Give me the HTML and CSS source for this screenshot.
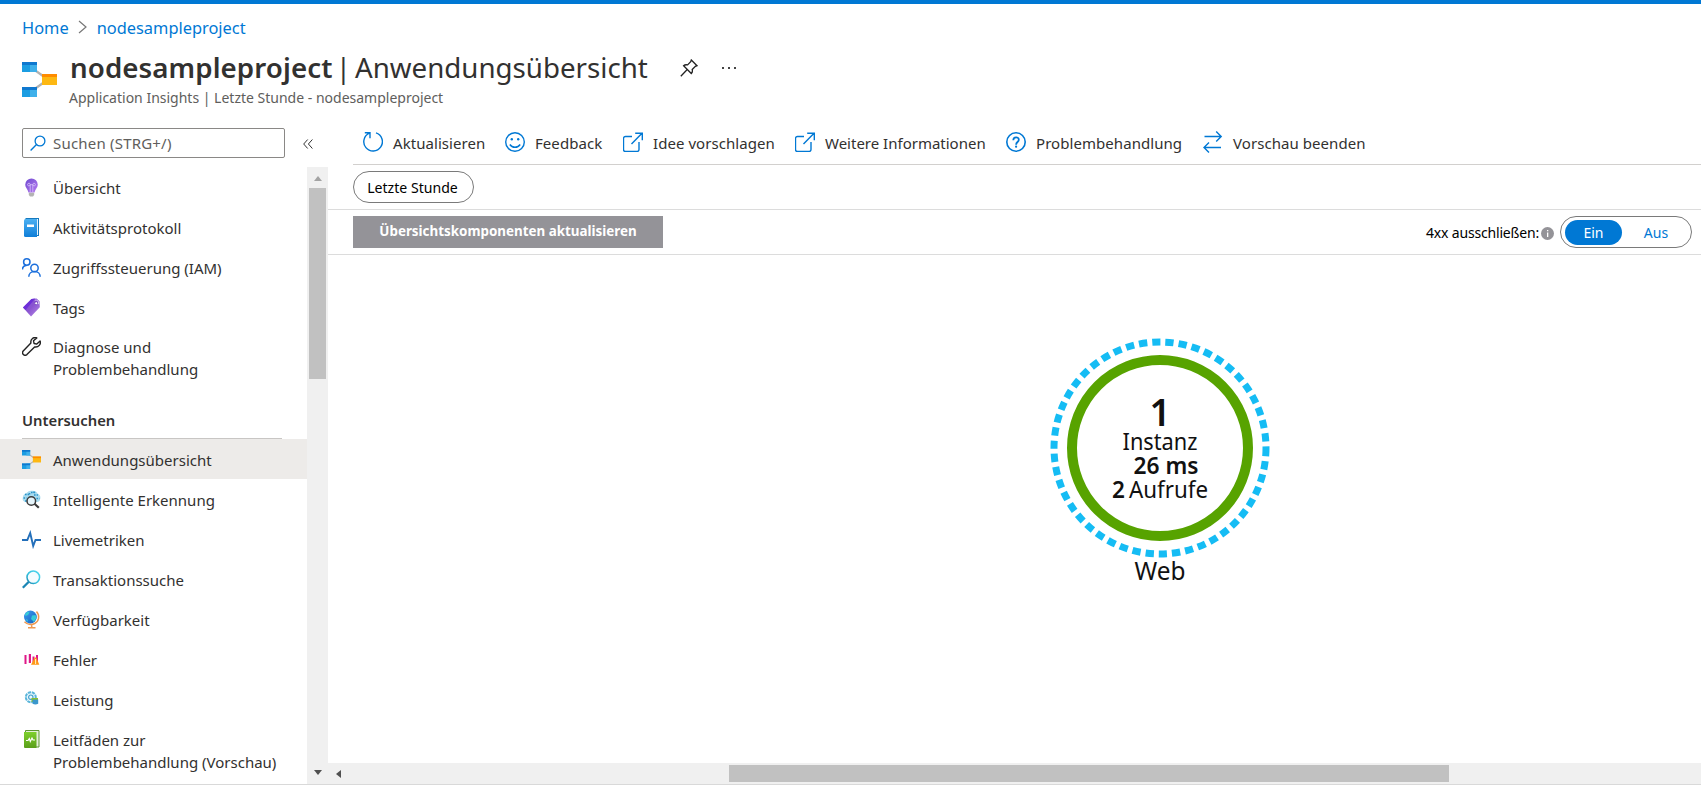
FILE: index.html
```html
<!DOCTYPE html>
<html lang="de">
<head>
<meta charset="utf-8">
<title>nodesampleproject | Anwendungsübersicht</title>
<link rel="stylesheet" href="styles.css">
</head>
<body>
<svg class="defs" width="0" height="0" aria-hidden="true">
  <defs>
    <linearGradient id="bulb" x1="0" y1="0" x2="1" y2="1"><stop offset="0" stop-color="#6f4bd0"/><stop offset="1" stop-color="#b77af0"/></linearGradient>
    <linearGradient id="book" x1="0" y1="0" x2="0" y2="1"><stop offset="0" stop-color="#4cb0f2"/><stop offset="1" stop-color="#0f7ed8"/></linearGradient>
    <linearGradient id="tag" x1="0" y1="0" x2="1" y2="1"><stop offset="0" stop-color="#7a45d8"/><stop offset=".5" stop-color="#8a55d0"/><stop offset="1" stop-color="#b88be8"/></linearGradient>
    <linearGradient id="lens" x1="0" y1="1" x2="1" y2="0"><stop offset="0" stop-color="#1a7ca8"/><stop offset=".4" stop-color="#32bfdc"/><stop offset="1" stop-color="#50d8f0"/></linearGradient>
    <linearGradient id="guide" x1="0" y1="0" x2="0" y2="1"><stop offset="0" stop-color="#7ed02c"/><stop offset="1" stop-color="#5a9e1a"/></linearGradient>
    <linearGradient id="earth" x1="0" y1="0" x2="1" y2="1"><stop offset="0" stop-color="#3f9cf0"/><stop offset="1" stop-color="#1160c0"/></linearGradient>
    <symbol id="appmap" viewBox="0 0 35 35">
      <path d="M14 9l7 5M14 26l7-5" stroke="#b3b3b3" stroke-width="2.2"/>
      <path d="M0 0h15v10H0zM0 25h15v10H0z" fill="#1b9de2"/>
      <path d="M8 0h7v10H8zM8 25h7v10H8z" fill="#3fb0ea"/>
      <path d="M0 0h15v3H0zM0 25h15v3H0z" fill="#0f78cf"/>
      <path d="M20 12h15v11H20z" fill="#fdb813"/><path d="M20 12h15v3H20z" fill="#ff8c00"/>
    </symbol>
    <symbol id="external" viewBox="0 0 20 20"><path d="M9 4.500H2.500a2 2 0 0 0-2 2V17.500a2 2 0 0 0 2 2h11.500a2 2 0 0 0 2-2V10M8.500 12L19 1.200M12.200 1.200H19.300V8.200" fill="none" stroke="#0078d4" stroke-width="1.400"/></symbol>
  </defs>
</svg>
<div class="page">
  <header class="header">
    <nav class="crumbs">
      <a>Home</a>
      <svg class="crumb-sep" width="9" height="14" viewBox="0 0 9 14"><path d="M1 1l7 6-7 6" fill="none" stroke="#777" stroke-width="1.200"/></svg>
      <a>nodesampleproject</a>
    </nav>
    <div class="heading">
      <svg class="heading-icon" width="35" height="35"><use href="#appmap"/></svg>
      <div>
        <h1 class="title"><b>nodesampleproject</b><i class="bar">|</i><span>Anwendungsübersicht</span>
          <svg class="pin" width="18" height="18" viewBox="0 0 18 18"><path d="M11.300 1l5.700 5.700-1.600.6-3.200 3.200c.5 1.800.1 3-.9 4L3.600 6.800c1-1 2.300-1.300 4-.9l3.100-3.200zM7 10.800L.8 17.200" fill="none" stroke="#222" stroke-width="1.300"/></svg>
          <svg class="dots" width="14" height="2" viewBox="0 0 14 2"><path d="M0 0h2v2H0zM6 0h2v2H6zM12 0h2v2h-2z" fill="#444"/></svg>
        </h1>
        <div class="subtitle">Application Insights | Letzte Stunde - nodesampleproject</div>
      </div>
    </div>
  </header>
  <div class="body">
    <aside class="side">
      <div class="search-row">
        <div class="search">
          <svg width="16" height="16" viewBox="0 0 16 16"><circle cx="10" cy="6" r="4.900" fill="none" stroke="#0078d4" stroke-width="1.300"/><path d="M6.500 9.500L.6 15.400" stroke="#0078d4" stroke-width="1.400"/></svg>
          <span>Suchen (STRG+/)</span>
        </div>
        <svg class="collapse" width="10" height="10" viewBox="0 0 10 10"><path d="M4.700.5L.7 5l4 4.500M9.400.5l-4 4.500 4 4.500" fill="none" stroke="#333" stroke-width="1"/></svg>
      </div>
      <div class="side-body">
        <ul class="menu">
          <li><svg width="19" height="19" viewBox="0 0 19 19"><path d="M9.500.5a6.300 6.300 0 0 1 6.300 6.300c0 3-2.800 4.700-3.300 7.700h-6C6 11.500 3.200 9.800 3.200 6.800A6.300 6.300 0 0 1 9.500.5z" fill="url(#bulb)"/><path d="M8.200 14V6.500M10.800 14V6.500M8.200 6.700h2.600M8.200 6.700a1.300 1.300 0 1 1-1.300-1.400c1 0 1.300.6 1.300 1.400M10.800 6.700a1.300 1.300 0 1 0 1.300-1.400c-1 0-1.300.6-1.300 1.400" fill="none" stroke="#d9c3fa" stroke-width=".8"/><path d="M6.800 14.800h5.400v2.200l-1.200 1.500H8l-1.200-1.500z" fill="#b3b3b3"/></svg><span>Übersicht</span></li>
          <li><svg width="19" height="19" viewBox="0 0 19 19"><path d="M3.500 0H17v18H3.500z" fill="#1679bd"/><path d="M4 1h12v16H4z" fill="#e8f2fa"/><path d="M2 2.500Q2 1 3.500 1H15v18H3.500Q2 19 2 17.500z" fill="url(#book)"/><path d="M5 6.500h7V9H5z" fill="#fff"/></svg><span>Aktivitätsprotokoll</span></li>
          <li><svg width="19" height="19" viewBox="0 0 19 19" fill="none" stroke="#1b6fdc" stroke-width="1.500"><circle cx="4.800" cy="4" r="3.200"/><path d="M.5 11.500C.5 9 2 7.500 4.500 7.400"/><circle cx="12.500" cy="10" r="3.700"/><path d="M6.800 18.800c0-3 2.300-5.200 5.700-5.200s5.700 2.200 5.700 5.200"/></svg><span>Zugriffssteuerung (IAM)</span></li>
          <li><svg width="19" height="19" viewBox="0 0 19 19"><path d="M1 9.500L9.500 1l5-.6 3 2.800.3 6L9 18.500z" fill="url(#tag)"/><path d="M1 9.500L9.500 1l3.600-.4-9.500 11.500z" fill="#6e2fd8"/><circle cx="14.200" cy="5.200" r="1.500" fill="#fff" stroke="#6431b0" stroke-width=".7"/><path d="M12.800 2.500c2-1.200 4.500.6 3.600 3.600" fill="none" stroke="#d8c4f5"/></svg><span>Tags</span></li>
          <li class="two"><svg width="19" height="19" viewBox="0 0 19 19"><path d="M14.800.9c-3-1.200-6.600 1.100-5.900 5L1.200 14c-1.900 2.400 1.200 5.600 3.700 3.600l7.700-7.700c3.900.8 6.700-2.800 5.500-6l-3.300 3.200-2.700-.6-.6-2.700z" fill="none" stroke="#222" stroke-width="1.400" stroke-linejoin="round"/></svg><span>Diagnose und Problembehandlung</span></li>
        </ul>
        <h2 class="group">Untersuchen</h2>
        <ul class="menu lower">
          <li class="active"><svg width="19" height="19" viewBox="0 0 35 35"><use href="#appmap" width="35" height="35"/></svg><span>Anwendungsübersicht</span></li>
          <li><svg width="19" height="19" viewBox="0 0 19 19"><path d="M3 12Q0 11 .8 7.800 1 4 4.500 3 7 .2 10 .8q4-.3 5.500 2.700 3.500 1.500 2.800 5-.2 3-2.500 3.500z" fill="#a9dcf0"/><path d="M3 4.500h4M9 2.500h5M1.500 8h3M12 5h4M14.500 8.500h3M3 11h2M7.500 3v2M12 1.500v2" stroke="#2d93c8" stroke-width="1.600" stroke-dasharray="1.600 1"/><circle cx="9.300" cy="11" r="4.300" fill="#e6f5fb" stroke="#3b3b3b" stroke-width="1.500"/><path d="M12.500 13.800l4.300 4" stroke="#3b3b3b" stroke-width="2.200"/></svg><span>Intelligente Erkennung</span></li>
          <li><svg width="19" height="19" viewBox="0 0 19 19"><path d="M0 10h5.300L8.200 3l3 13 2.300-6H19" fill="none" stroke="#236fba" stroke-width="1.900"/></svg><span>Livemetriken</span></li>
          <li><svg width="19" height="19" viewBox="0 0 19 19"><circle cx="11.300" cy="7.300" r="6.300" fill="#f4fcff" stroke="url(#lens)" stroke-width="1.500"/><path d="M6.600 12L.8 17.800" stroke="#1b86b5" stroke-width="2.300"/></svg><span>Transaktionssuche</span></li>
          <li><svg width="19" height="19" viewBox="0 0 19 19"><path d="M14.500 1.500c3.600 4 2.500 10-1.800 12-3.200 1.600-7.500 1-10.200-1.800M9.700 14.500v3M6 17.700h7.500" fill="none" stroke="#ee9850" stroke-width="1.500"/><circle cx="8.400" cy="7" r="6.400" fill="url(#earth)"/><path d="M3 4l3-2.500 1.500 1L6 5 3.500 6zM10 5.500l3.500-.5 1 3-2.500 4-3-3zM4 9l2 1-1 2z" fill="#35cbd8"/></svg><span>Verfügbarkeit</span></li>
          <li><svg width="19" height="19" viewBox="0 0 19 19"><path d="M2.500 5h2v9h-2zM6.800 4H9v9H6.800zM10.500 6.500h2v6h-2zM14 5h2v8h-2z" fill="#df1888"/><path d="M12.800 7.500h1.500l3 7.200H9z" fill="#ff9716"/><path d="M13.600 9v5" stroke="#fff1cf" stroke-width="1"/></svg><span>Fehler</span></li>
          <li><svg width="19" height="19" viewBox="0 0 19 19"><circle cx="8.800" cy="7.200" r="5" fill="#e8f6fc" stroke="#5ab5da" stroke-width="2" stroke-dasharray="3.200 .8"/><circle cx="8.800" cy="7.200" r="2.200" fill="none" stroke="#46a2ce" stroke-width="1.200"/><path d="M9.500 8h6.500v4H9.500z" fill="#8abf2e"/><path d="M10.500 9.500h5.700v4.300q-2.800 1.400-5.700 0z" fill="#3a97cc"/></svg><span>Leistung</span></li>
          <li class="two"><svg width="19" height="19" viewBox="0 0 19 19"><path d="M3.500.5H17V17H3.500z" fill="#e4f0d8" stroke="#5d9632"/><path d="M2 2h12.500V18H3q-1 0-1-1z" fill="url(#guide)"/><path d="M4 10.500h2l1.300-2 1 3L10 8l1 2h2" fill="none" stroke="#fff" stroke-width="1.200"/></svg><span>Leitfäden zur Problembehandlung (Vorschau)</span></li>
        </ul>
        <div class="vscroll"><i class="up"></i><i class="vthumb"></i><i class="down"></i></div>
      </div>
    </aside>
    <main class="main">
      <div class="toolbar">
        <span class="cmd c1"><svg width="20" height="20" viewBox="0 0 20 20"><path d="M13 .9A9.300 9.300 0 1 1 6.400 1.200M1.800.8H7V6.200" fill="none" stroke="#0078d4" stroke-width="1.400"/></svg>Aktualisieren</span>
        <span class="cmd c2"><svg width="20" height="20" viewBox="0 0 20 20"><circle cx="10" cy="10" r="9.300" fill="none" stroke="#0078d4" stroke-width="1.400"/><circle cx="6.800" cy="7.200" r="1.200" fill="#0078d4"/><circle cx="13.200" cy="7.200" r="1.200" fill="#0078d4"/><path d="M4.800 12.500c2.400 3.700 8 3.700 10.400 0" fill="none" stroke="#0078d4" stroke-width="1.400"/></svg>Feedback</span>
        <span class="cmd c3"><svg width="20" height="20"><use href="#external"/></svg>Idee vorschlagen</span>
        <span class="cmd c4"><svg width="20" height="20"><use href="#external"/></svg>Weitere Informationen</span>
        <span class="cmd c5"><svg width="20" height="20" viewBox="0 0 20 20"><g fill="none" stroke="#0078d4"><circle cx="10" cy="10" r="9.200" stroke-width="1.600"/><path d="M7.300 8.200c0-3.700 5.500-3.800 5.500-.5 0 2.400-2.700 2.300-2.700 5" stroke-width="1.800"/></g><circle cx="10.100" cy="14.700" r="1.100" fill="#0078d4"/></svg>Problembehandlung</span>
        <span class="cmd c6"><svg width="20" height="24" viewBox="0 0 20 24"><path d="M1.500 6.500H18M13.200 1.500l5 5-5 5M18 17.500H1M6 12.500l-5 5 5 5" fill="none" stroke="#0078d4" stroke-width="1.400"/></svg>Vorschau beenden</span>
      </div>
      <div class="filters"><span class="pill">Letzte Stunde</span></div>
      <div class="options">
        <button class="update">Übersichtskomponenten aktualisieren</button>
        <div class="exclude">
          <span>4xx ausschließen:</span>
          <svg width="13" height="13" viewBox="0 0 13 13"><circle cx="6.500" cy="6.500" r="6.500" fill="#949398"/><path d="M6 3h1.300v1.300H6zM6 5.500h1.300V10H6z" fill="#fff"/></svg>
          <div class="toggle"><span class="on">Ein</span><span class="off">Aus</span></div>
        </div>
      </div>
      <div class="canvas">
        <svg class="node" width="220" height="250" viewBox="0 0 220 250">
          <circle cx="110" cy="110" r="106" fill="none" stroke="#15bcf4" stroke-width="7" stroke-dasharray="8.300 4.974"/>
          <circle cx="110" cy="110" r="88" fill="#fff" stroke="#57a300" stroke-width="10"/>
          <text class="count" x="110" y="87.500">1</text>
          <text class="label" x="110" y="111.500" textLength="75" lengthAdjust="spacingAndGlyphs">Instanz</text>
          <text class="strong" x="116" y="135.500" textLength="65" lengthAdjust="spacingAndGlyphs">26 ms</text>
          <text class="strong" x="68.500" y="159.500">2</text>
          <text class="label" x="118.500" y="159.500" textLength="79" lengthAdjust="spacingAndGlyphs">Aufrufe</text>
          <text class="name" x="110" y="241.500" textLength="51" lengthAdjust="spacingAndGlyphs">Web</text>
        </svg>
      </div>
      <div class="hscroll"><i class="left"></i><i class="hthumb"></i></div>
    </main>
  </div>
</div>
</body>
</html>
```
FILE: styles.css
```css
* { box-sizing: border-box; }
body { margin: 0; font-family: "Noto Sans", "Open Sans", sans-serif; color: #323130; background: #fff; }
svg { display: block; flex: none; }
.defs { position: absolute; }
.page { width: 1701px; height: 785px; display: flex; flex-direction: column; border-top: 4px solid #0078d4; border-bottom: 1px solid #d9d9d9; overflow: hidden; }
.header { height: 118px; flex: none; }
.crumbs { display: flex; align-items: center; height: 24px; margin: 11px 0 0 22px; font-size: 16.4px; color: #0078d4; }
.crumb-sep { margin: 0 10px 0 9px; }
.heading { display: flex; padding-left: 22px; }
.heading-icon { margin: 23px 13px 0 0; }
.title { display: flex; align-items: center; margin: 7px 0 0; height: 42px; font-size: 27.7px; font-weight: 400; white-space: nowrap; }
.title b { font-weight: 600; width: 262px; letter-spacing: .08px; }
.bar { font-style: normal; width: 23px; text-align: center; }
.pin { margin: 2px 0 0 32px; }
.dots { margin: 2px 0 0 24px; }
.subtitle { font-size: 14px; line-height: 20px; color: #605e5c; margin: 0 0 0 -1px; white-space: nowrap; }

.body { flex: 1; display: flex; min-height: 0; }
.side { width: 328px; flex: none; display: flex; flex-direction: column; }
.search-row { display: flex; align-items: center; height: 45px; padding: 0 0 3px 22px; flex: none; }
.search { width: 263px; height: 30px; border: 1px solid #8a8886; border-radius: 2px; display: flex; align-items: center; gap: 7px; padding-left: 7px; font-size: 15px; color: #605e5c; }
.search span { letter-spacing: .2px; }
.collapse { margin: 2px 0 0 18px; }
.side-body { position: relative; flex: 1; min-height: 0; overflow: hidden; padding: 1px 21px 0 0; }
.menu { list-style: none; margin: 0; padding: 0; }
.menu li { display: flex; min-height: 40px; padding: 9px 16px 0 22px; gap: 12px; font-size: 15px; line-height: 22px; }
.menu li svg { margin-top: 1px; }
.menu .two { height: 62px; padding-top: 8px; }
.lower li, .menu.lower .two { padding-top: 10px; }
.menu .active { background: #edebe9; }
.group { margin: 16px 25px 0 22px; height: 33px; border-bottom: 1px solid #c8c6c4; font-size: 14.8px; line-height: 28px; font-weight: 600; }
.vscroll { position: absolute; top: 0; right: 0; bottom: 0; width: 21px; background: #f0f0f0; display: flex; flex-direction: column; align-items: center; }
.up { border: 4.500px solid transparent; border-top: 0; border-bottom: 5px solid #a3a3a3; margin: 9px 0 7px; }
.vthumb { width: 17px; height: 191px; background: #c1c1c1; }
.down { border: 4.500px solid transparent; border-bottom: 0; border-top: 5px solid #505050; margin: auto 0 9px; }

.main { flex: 1; display: flex; flex-direction: column; min-width: 0; }
.toolbar { height: 43px; margin-left: 25px; padding: 0 0 0 10px; border-bottom: 1px solid #d2d0ce; display: flex; align-items: center; gap: 20px; font-size: 15px; white-space: nowrap; }
.cmd { display: flex; align-items: center; gap: 10px; height: 40px; letter-spacing: .06px; }
.cmd svg { margin-top: -2px; }
.c1 { width: 122px; }
.c2 { width: 98px; }
.c3 { width: 152px; }
.c4 { width: 191px; letter-spacing: 0; }
.c5 { width: 177px; }
.filters { height: 45px; border-bottom: 1px solid #dcdcdc; padding: 6px 0 0 25px; }
.pill { display: flex; align-items: center; justify-content: center; width: 121px; height: 32px; border: 1px solid #7a7a7a; border-radius: 16px; padding-right: 2px; font-size: 14.100px; color: #000; }
.options { height: 45px; border-bottom: 1px solid #dcdcdc; padding: 6px 9px 0 25px; display: flex; justify-content: space-between; }
.update { width: 310px; height: 32px; border: 0; padding: 0 0 3px; background: #949398; color: #fff; font: 700 13.400px "Noto Sans", sans-serif; white-space: nowrap; }
.exclude { display: flex; align-items: center; height: 32px; font-size: 14px; color: #000; white-space: nowrap; }
.exclude > span { letter-spacing: -.18px; }
.exclude svg { margin: 3px 6px 0 2px; }
.toggle { display: flex; align-items: center; width: 132px; height: 32px; border: 1px solid #7a7a7a; border-radius: 16px; padding-left: 4px; }
.on, .off { width: 57px; height: 25px; line-height: 26px; text-align: center; border-radius: 13px; }
.on { background: #0078d4; color: #fff; }
.off { color: #0078d4; width: 68px; }
.canvas { flex: 1; padding: 82.500px 0 0 722px; }
.node text { fill: #111; text-anchor: middle; }
.node .count { font-size: 37px; font-weight: 600; }
.node .label { font-size: 23px; }
.node .strong { font-size: 22.500px; font-weight: 600; }
.node .name { font-size: 25px; }
.hscroll { height: 21px; background: #f0f0f0; display: flex; align-items: center; flex: none; }
.left { border: 4.500px solid transparent; border-left: 0; border-right: 5px solid #505050; margin: 0 388px 0 8px; }
.hthumb { width: 720px; height: 17px; background: #c1c1c1; }
```
